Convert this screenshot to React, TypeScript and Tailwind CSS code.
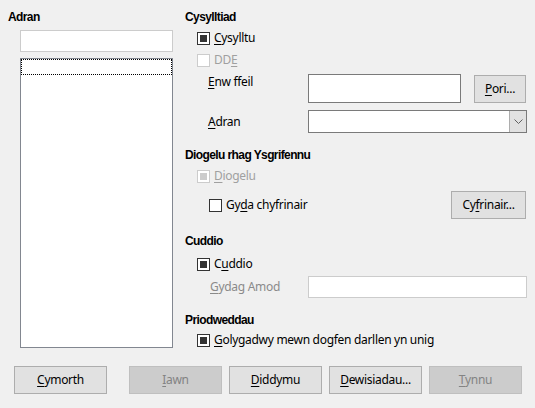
import React from "react";

const U = ({ children }: { children: React.ReactNode }) => (
  <span className="underline underline-offset-2 decoration-1">{children}</span>
);

const H = ({ children, className = "" }: { children: React.ReactNode; className?: string }) => (
  <div
    className={"font-bold tracking-[-0.6px] " + className}
    style={{ fontFamily: '"Liberation Sans", Arial, sans-serif' }}
  >
    {children}
  </div>
);

function Check({ state, disabled }: { state: "on" | "off"; disabled?: boolean }) {
  return (
    <span
      className={
        "flex h-[13px] w-[13px] shrink-0 items-center justify-center border bg-white " +
        (disabled ? "border-[#cccccc]" : "border-[#333333]")
      }
    >
      {state === "on" && (
        <span className={"h-[7px] w-[7px] " + (disabled ? "bg-[#cccccc]" : "bg-[#333333]")} />
      )}
    </span>
  );
}

function Btn({
  children,
  w,
  disabled,
}: {
  children: React.ReactNode;
  w: string;
  disabled?: boolean;
}) {
  return (
    <div
      className={
        "flex h-[28px] items-center justify-center border " +
        w +
        (disabled
          ? " border-[#bfbfbf] bg-[#cccccc] text-[#838383]"
          : " border-[#adadad] bg-[#e1e1e1] text-black")
      }
    >
      {children}
    </div>
  );
}

export default function App() {
  return (
    <div
      className="h-[408px] w-[535px] overflow-hidden bg-[#f0f0f0] text-[12px] leading-[16px] tracking-[-0.3px] text-black"
      style={{ fontFamily: '"Noto Sans", sans-serif' }}
    >
      <div className="flex h-[366px]">
        {/* left column */}
        <div className="w-[185px] pl-[8px] pt-[9px]">
          <H>Adran</H>
          <div className="ml-[12px] mt-[5px] h-[22px] w-[153px] border border-[#cccccc] bg-white" />
          <div className="ml-[12px] mt-[6px] h-[290px] w-[153px] border border-[#828790] bg-white">
            <div className="h-[16px] border border-dotted border-black" />
          </div>
        </div>

        {/* right column */}
        <div className="w-[342px] pt-[9px]">
          <H>Cysylltiad</H>
          <div className="mt-[3px] flex h-[20px] items-center gap-[4px] pl-[12px]">
            <Check state="on" />
            <span>
              <U>C</U>ysylltu
            </span>
          </div>
          <div className="mt-[2px] flex h-[20px] items-center gap-[4px] pl-[12px] text-[#a0a0a0]">
            <Check state="off" disabled />
            <span>
              DD<U>E</U>
            </span>
          </div>
          <div className="mt-[4px] flex h-[29px] pl-[23px]">
            <span className="w-[100px] pt-[0px]">
              <U>E</U>nw ffeil
            </span>
            <div className="h-[29px] w-[153px] border border-[#7a7a7a] bg-white" />
            <div className="ml-[13px] mt-[1px]">
              <Btn w="w-[52px]">
                <span>
                  <U>P</U>ori...
                </span>
              </Btn>
            </div>
          </div>
          <div className="mt-[7px] flex h-[23px] items-center pl-[23px]">
            <span className="w-[100px]">
              <U>A</U>dran
            </span>
            <div className="flex h-[23px] w-[219px] border border-[#7a7a7a] bg-white">
              <div className="flex-1" />
              <div className="flex w-[17px] items-center justify-center border-l border-[#adadad] bg-[#e1e1e1]">
                <svg width="9" height="6" viewBox="0 0 9 6">
                  <path d="M0.5 0.5 L4.5 4.5 L8.5 0.5" fill="none" stroke="#606060" strokeWidth="1" />
                </svg>
              </div>
            </div>
          </div>
          <H className="mt-[14px]">Diogelu rhag Ysgrifennu</H>
          <div className="mt-[3px] flex h-[20px] items-center gap-[4px] pl-[12px] text-[#a0a0a0]">
            <Check state="on" disabled />
            <span>
              <U>D</U>iogelu
            </span>
          </div>
          <div className="mt-[5px] flex h-[28px] items-center pl-[24px]">
            <Check state="off" />
            <span className="ml-[4px]">
              Gy<U>d</U>a chyfrinair
            </span>
            <div className="flex-1" />
            <div className="mr-[1px]">
              <Btn w="w-[75px]">
                <span>
                  Cy<U>f</U>rinair...
                </span>
              </Btn>
            </div>
          </div>
          <H className="mt-[14px]">Cuddio</H>
          <div className="mt-[5px] flex h-[20px] items-center gap-[4px] pl-[12px]">
            <Check state="on" />
            <span>
              C<U>u</U>ddio
            </span>
          </div>
          <div className="mt-[2px] flex h-[22px] items-center pl-[25px]">
            <span className="w-[98px] text-[#8a8a8a]">
              <U>G</U>ydag Amod
            </span>
            <div className="h-[22px] w-[219px] border border-[#cccccc] bg-white" />
          </div>
          <H className="mt-[14px]">Priodweddau</H>
          <div className="mt-[2px] flex h-[20px] items-center gap-[4px] pl-[12px]">
            <Check state="on" />
            <span>
              <U>G</U>olygadwy mewn dogfen darllen yn unig
            </span>
          </div>
        </div>
      </div>

      {/* bottom buttons */}
      <div className="flex pl-[14px]">
        <Btn w="w-[93px]">
          <span>
            <U>C</U>ymorth
          </span>
        </Btn>
        <div className="ml-[22px]">
          <Btn w="w-[93px]" disabled>
            <span>
              <U>I</U>awn
            </span>
          </Btn>
        </div>
        <div className="ml-[7px]">
          <Btn w="w-[93px]">
            <span>
              <U>D</U>iddymu
            </span>
          </Btn>
        </div>
        <div className="ml-[7px]">
          <Btn w="w-[93px]">
            <span>
              <U>D</U>ewisiadau...
            </span>
          </Btn>
        </div>
        <div className="ml-[7px]">
          <Btn w="w-[93px]" disabled>
            <span>
              <U>T</U>ynnu
            </span>
          </Btn>
        </div>
      </div>
    </div>
  );
}
